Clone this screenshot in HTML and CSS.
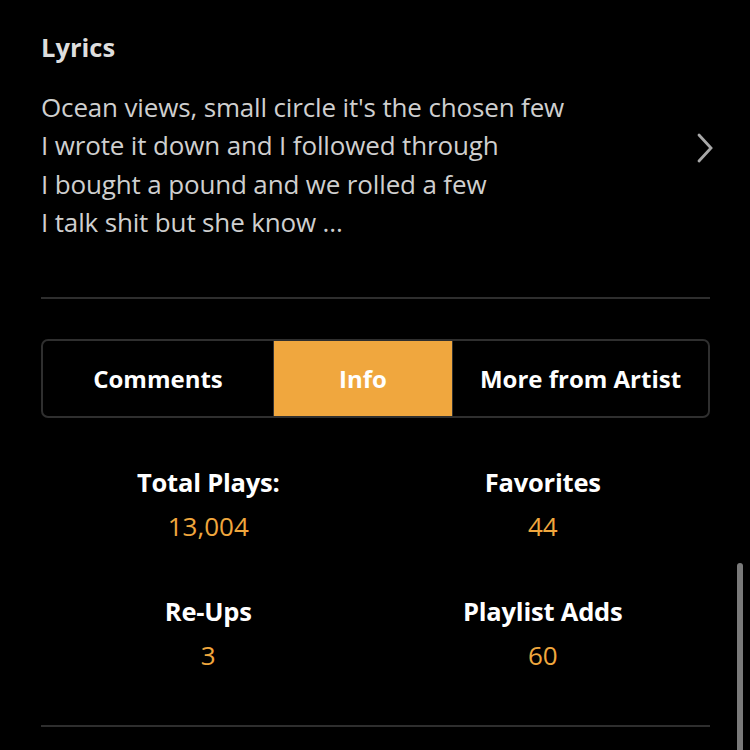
FILE: index.html
```html
<!DOCTYPE html>
<html>
<head>
<meta charset="utf-8">
<link rel="stylesheet" href="styles.css">
</head>
<body>
<div class="page">
  <section class="lyrics">
    <div class="lyrics-text">
      <h2 class="heading">Lyrics</h2>
      <div class="lines">
        <div>Ocean views, small circle it's the chosen few</div>
        <div>I wrote it down and I followed through</div>
        <div>I bought a pound and we rolled a few</div>
        <div>I talk shit but she know ...</div>
      </div>
    </div>
    <svg class="chevron" width="20" height="32" viewBox="0 0 20 32"><path d="M4 3 L16 16 L4 29" fill="none" stroke="#a8a8a8" stroke-width="2.8" stroke-linecap="round" stroke-linejoin="miter"/></svg>
  </section>
  <hr class="divider">
  <nav class="tabs">
    <div class="tab tab-comments">Comments</div>
    <div class="tab tab-info active">Info</div>
    <div class="tab tab-more">More from Artist</div>
  </nav>
  <div class="stats">
    <div class="stat"><div class="label">Total Plays:</div><div class="value">13,004</div></div>
    <div class="stat"><div class="label">Favorites</div><div class="value">44</div></div>
    <div class="stat"><div class="label">Re-Ups</div><div class="value">3</div></div>
    <div class="stat"><div class="label">Playlist Adds</div><div class="value">60</div></div>
  </div>
  <hr class="divider bottom">
</div>
<div class="scrollbar"></div>
</body>
</html>
```
FILE: styles.css
```css
html, body {
  margin: 0;
  padding: 0;
  background: #000;
  height: 100%;
  overflow: hidden;
}
body {
  font-family: "Open Sans", "Liberation Sans", sans-serif;
  color: #fff;
}
.page {
  width: 669px;
  padding: 30px 40px 0 41px;
}
.lyrics {
  display: flex;
  align-items: flex-start;
  justify-content: space-between;
}
.heading {
  margin: 0;
  font-size: 25.5px;
  line-height: 34px;
  font-weight: 700;
  color: #dedede;
}
.lines {
  margin-top: 24px;
  font-size: 26px;
  line-height: 38.3px;
  color: #cfcfcf;
  font-weight: 400;
  letter-spacing: -0.15px;
}
.chevron {
  margin-top: 102px;
  margin-right: -5px;
}
.divider {
  margin: 56px 0 0 0;
  border: 0;
  height: 2px;
  background: #2e2e2e;
}
.tabs {
  margin-top: 40px;
  display: flex;
  height: 75px;
  border: 2px solid #2f2f2f;
  border-radius: 7px;
  overflow: hidden;
}
.tab {
  display: flex;
  align-items: center;
  justify-content: center;
  font-size: 24px;
  font-weight: 700;
  color: #fff;
}
.tab-comments { width: 230px; }
.tab-info { width: 178px; }
.tab-more { flex: 1; }
.tab.active {
  background: #f0a73e;
  border-left: 1px solid #333;
  border-right: 1px solid #333;
}
.stats {
  margin-top: 48px;
  display: grid;
  grid-template-columns: 1fr 1fr;
  row-gap: 53px;
}
.stat {
  text-align: center;
}
.label {
  font-size: 25.5px;
  line-height: 32px;
  font-weight: 700;
  color: #fff;
  letter-spacing: -0.2px;
}
.value {
  margin-top: 12px;
  font-size: 26px;
  line-height: 32px;
  color: #f0a73e;
}
.divider.bottom {
  margin-top: 54px;
}
.scrollbar {
  position: fixed;
  left: 737px;
  top: 563px;
  width: 6px;
  height: 200px;
  border-radius: 3px;
  background: #7a7a7a;
}
```
